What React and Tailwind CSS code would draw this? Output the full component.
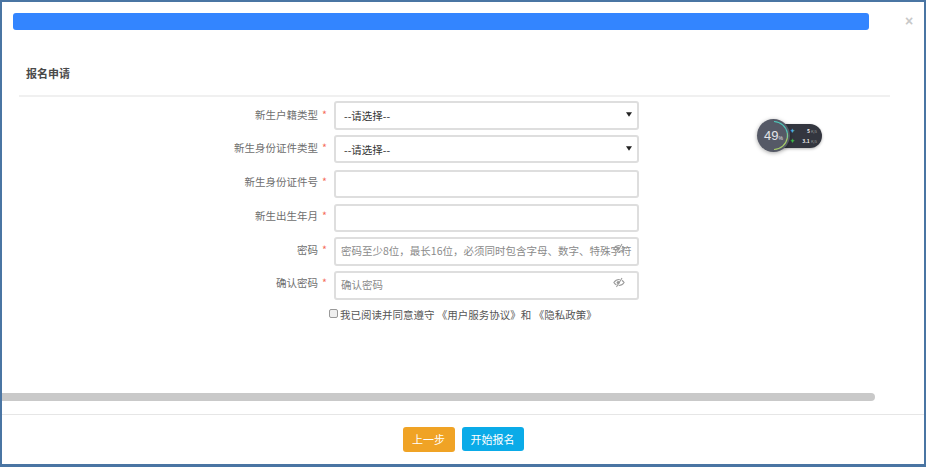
import React from "react";

const font = { fontFamily: '"Noto Sans CJK SC", "Liberation Sans", sans-serif' };

function EyeOff() {
  return (
    <svg viewBox="0 0 14 12" className="absolute right-[14px] top-[7px] h-[11px] w-[12px]" fill="none" stroke="#999" strokeWidth="1.2">
      <path d="M1 6c1.600-2.400 3.600-3.600 6-3.600S11.400 3.600 13 6c-1.600 2.400-3.600 3.600-6 3.600S2.600 8.400 1 6z" />
      <path d="M10.500 .8 4 11.200" stroke="#fff" strokeWidth="2.600" />
      <path d="M10.500 .8 4 11.200" />
      <circle cx="6" cy="6" r="1.800" fill="#999" stroke="none" />
    </svg>
  );
}

function Row({ label, children }) {
  return (
    <div className="flex h-[28.5px] items-start">
      <div className="flex w-[325px] justify-end pt-[3.5px] text-[10.5px] leading-[20px] text-[#6e6e6e]">
        <span>{label}</span>
        <span className="ml-[4px] w-[5px] text-[#f56c5c]">*</span>
      </div>
      <div className="relative ml-[7px] h-[28.5px] w-[305px]">{children}</div>
    </div>
  );
}

const box = "h-full w-full rounded-[3px] border-2 border-[#dedede] bg-white outline-none";

function SelectBox() {
  return (
    <div className={`${box} flex items-center justify-between pl-[8px] pr-[5px] pt-[1px] text-[10.5px] text-[#333]`}>
      <span>--请选择--</span>
      <svg viewBox="0 0 8 6" className="mb-[3px] h-[5px] w-[6px]"><path d="M0 0h8L4 6z" fill="#222" /></svg>
    </div>
  );
}

function Field({ placeholder, eye }) {
  return (
    <>
      <input
        placeholder={placeholder}
        className={`${box} px-[5px] pb-[2px] text-[10.5px] placeholder:text-[#8a8a8a]`}
        style={font}
      />
      {eye && <EyeOff />}
    </>
  );
}

function Monitor() {
  return (
    <div className="absolute left-[757px] top-[119px] flex h-[33px] w-[66px] items-center">
      <div className="absolute left-[12px] top-[5px] flex h-[24px] w-[53px] flex-col justify-center rounded-r-full bg-[#33363f] pl-[21px] text-[5px] font-bold leading-[10px] text-[#eee] shadow-[0_1px_3px_rgba(0,0,0,0.3)]">
        <div className="flex items-center justify-between pr-[5px]">
          <span className="text-[6px] leading-none text-[#4fb7e8]">✦</span>
          <span>5 <span className="text-[4px] font-normal text-[#999]">K/s</span></span>
        </div>
        <div className="flex items-center justify-between pr-[5px]">
          <span className="text-[6px] leading-none text-[#3fc04a]">✦</span>
          <span>3.1 <span className="text-[4px] font-normal text-[#999]">K/s</span></span>
        </div>
      </div>
      <div className="relative flex h-[33px] w-[33px] items-center justify-center rounded-full bg-[#555966] text-[13px] leading-none text-[#e4e4e8] shadow-[0_1px_4px_rgba(0,0,0,0.35)]" style={{ fontFamily: '"Liberation Sans", sans-serif' }}>
        <svg viewBox="0 0 33 33" className="absolute inset-0" fill="none" strokeWidth="1.200">
          <path d="M17 2.500A14 14 0 0 1 30.300 14" stroke="#4fc6b8" />
          <path d="M30.300 19A14 14 0 0 1 17 30.500" stroke="#a9cf6a" />
          <path d="M30.300 14A14 14 0 0 1 30.300 19" stroke="#7fcb90" />
        </svg>
        <span>49<span className="text-[5px]">%</span></span>
      </div>
    </div>
  );
}

export default function App() {
  return (
    <div className="relative h-[468px] w-[927px] overflow-hidden bg-white" style={font}>
      <div className="flex h-[467px] w-[926px] flex-col border-x-2 border-t-2 border-b-[3px] border-[#4a75a3] bg-white">
        <div className="flex items-start pl-[11px] pt-[11px]">
          <div className="h-[17px] w-[856px] rounded-[3px] bg-[#3385ff]" />
          <span className="ml-[36px] mt-[1px] text-[14px] font-bold leading-[14px] text-[#c8c8c8]" style={{ fontFamily: '"Liberation Sans", sans-serif' }}>×</span>
        </div>

        <div className="ml-[17px] mt-[33px] w-[871px] border-b-2 border-[#f0f0f0] pb-[12px] pl-[7px] text-[11px] font-bold leading-[20px] text-[#4a4a4a]">
          报名申请
        </div>

        <div className="mt-[4px] flex flex-col gap-[5.3px]">
          <Row label="新生户籍类型"><SelectBox /></Row>
          <Row label="新生身份证件类型"><SelectBox /></Row>
          <Row label="新生身份证件号"><Field /></Row>
          <Row label="新生出生年月"><Field /></Row>
          <Row label="密码"><Field placeholder="密码至少8位，最长16位，必须同时包含字母、数字、特殊字符" eye /></Row>
          <Row label="确认密码"><Field placeholder="确认密码" eye /></Row>
        </div>

        <div className="ml-[327px] mt-[6.5px] flex h-[20px] items-center text-[10.5px] text-[#555]">
          <span className="mb-[3px] mr-[2px] h-[9px] w-[9px] rounded-[2px] border border-[#999] bg-[#efefef]" />
          <span>我已阅读并同意遵守 《用户服务协议》和 《隐私政策》</span>
        </div>

        <div className="mt-[68px] h-[8px] w-[873px] rounded-r-full bg-[#c9c9c9]" />

        <div className="mt-[13px] flex flex-1 justify-center gap-[7px] border-t border-[#e6e6e6] pt-[12px]">
          <div className="flex h-[25px] w-[52px] items-center justify-center rounded-[3px] bg-[#f0a325] text-[11px] text-white">上一步</div>
          <div className="flex h-[24px] w-[62px] items-center justify-center rounded-[3px] bg-[#0aabe8] text-[11px] text-white">开始报名</div>
        </div>
      </div>
      <Monitor />
    </div>
  );
}
